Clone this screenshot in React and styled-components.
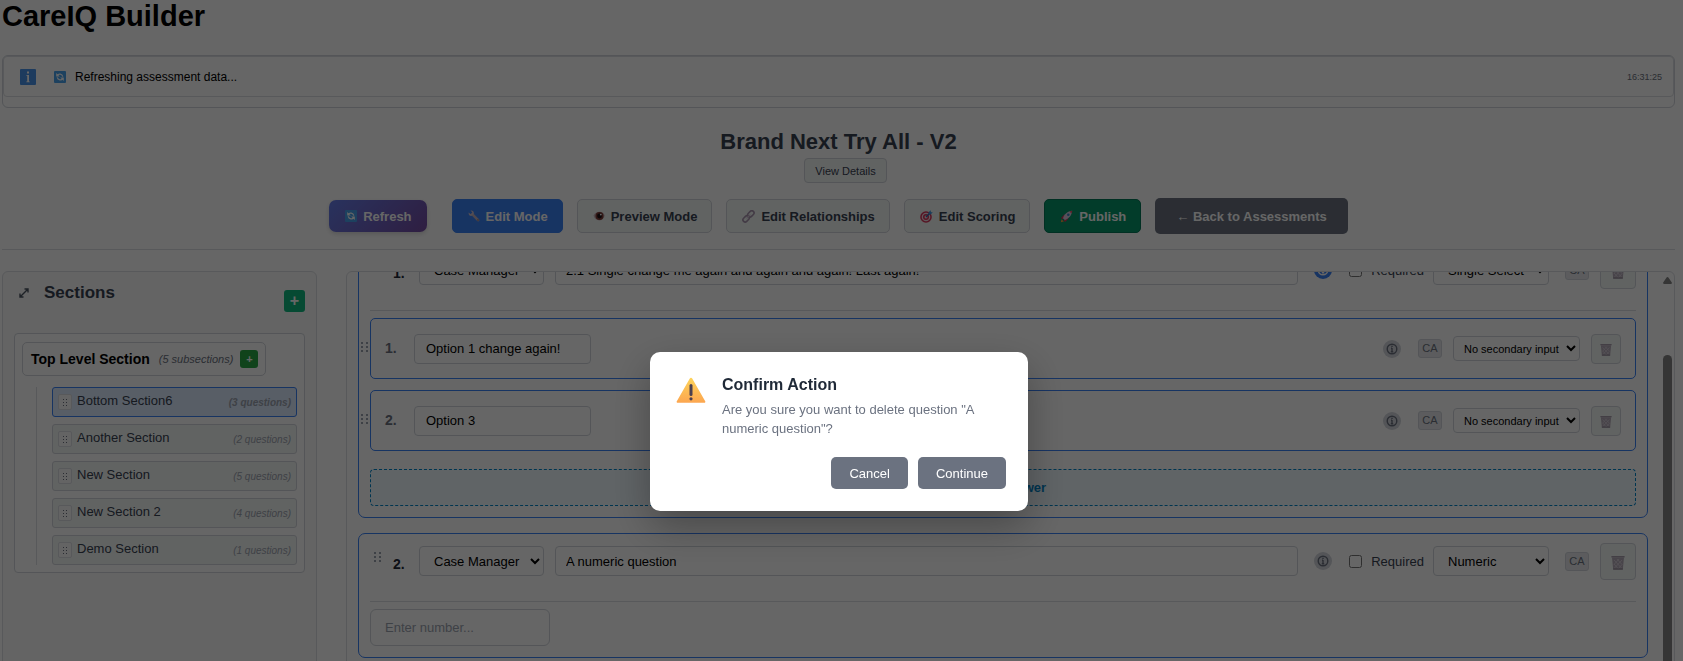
import React, { useLayoutEffect, useRef } from "react";
import styled, { createGlobalStyle, css } from "styled-components";

const GlobalStyle = createGlobalStyle`
  *, *::before, *::after { box-sizing: border-box; }
  body {
    margin: 0;
    background: #fff;
    color: #000;
    font-family: "Liberation Sans", Arial, sans-serif;
    font-size: 13px;
  }
  button, input, select { font-family: inherit; font-size: 13px; margin: 0; }
  h1, h2, h3, p, ul { margin: 0; padding: 0; }
  svg { flex: none; }
`;

/* ---------- Page frame ---------- */

const Page = styled.main`
  display: flex;
  flex-direction: column;
  height: 100vh;
  overflow: hidden;
  padding: 0 8px 0 2px;
`;

const PageTitle = styled.h1`
  flex: none;
  font-size: 29px;
  line-height: 33px;
  margin-bottom: 22px;
`;

const StatusPanel = styled.section`
  flex: none;
  border: 1px solid #d1d5db;
  border-radius: 6px;
  padding-bottom: 10px;
`;

const StatusRow = styled.div`
  display: flex;
  align-items: center;
  height: 41px;
  padding: 0 11px 0 16px;
  border: 1px solid #dcdfe3;
  border-radius: 4px;
  font-size: 12px;
`;

const StatusText = styled.span`
  display: flex;
  align-items: center;
  gap: 9px;
  flex: 1;
  margin-left: 18px;
`;

const StatusTime = styled.time`
  font-size: 9px;
  color: #6b7280;
`;

const Header = styled.header`
  flex: none;
  display: flex;
  flex-direction: column;
  align-items: center;
  padding: 21px 0 15px;
  margin-bottom: 21px;
  border-bottom: 1px solid #dcdfe3;
`;

const AssessmentName = styled.h2`
  font-size: 22px;
  line-height: 26px;
  margin-bottom: 3px;
  color: #374151;
`;

const DetailsButton = styled.button`
  height: 25px;
  margin-left: 14px;
  padding: 0 10px;
  font-size: 11px;
  color: #374151;
  background: #f3f7f5;
  border: 1px solid #d1d5db;
  border-radius: 4px;
`;

const Toolbar = styled.div`
  display: flex;
  align-items: center;
  gap: 14px;
  margin-top: 15px;
`;

const toolTones = {
  plain: css`
    color: #374151;
    background: #f3f7f5;
    border: 1px solid #d1d5db;
  `,
  blue: css`
    color: #fff;
    background: #3b82f6;
    border: 1px solid #3b82f6;
  `,
  green: css`
    color: #fff;
    background: #059669;
    border: 1px solid #047857;
  `,
  violet: css`
    height: 32px;
    margin-right: 11px;
    padding: 0 15px 0 16px;
    color: #fff;
    background: linear-gradient(135deg, #667eea 0%, #764ba2 100%);
    border: 0;
    border-radius: 7px;
    box-shadow: 0 2px 4px rgba(0, 0, 0, 0.15);
  `,
  slate: css`
    height: 36px;
    padding: 0 21px;
    color: #fff;
    background: #6b7280;
    border: 0;
  `,
};

const ToolButton = styled.button`
  display: flex;
  align-items: center;
  gap: 6px;
  height: 34px;
  padding: 0 14px 0 15px;
  font-weight: 700;
  border-radius: 5px;
  white-space: nowrap;
  ${(p) => toolTones[p.$tone]}
`;

/* ---------- Workspace ---------- */

const Workspace = styled.div`
  flex: none;
  display: flex;
  gap: 29px;
  height: 90vh;
`;

const Sidebar = styled.aside`
  flex: 0 0 315px;
  padding: 11px;
  background: #fafafa;
  border: 1px solid #dcdfe3;
  border-radius: 6px;
`;

const SidebarHead = styled.div`
  display: flex;
  align-items: flex-start;
  height: 50px;
  padding-left: 4px;
`;

const ExpandButton = styled.button`
  display: flex;
  padding: 4px 0;
  background: none;
  border: 0;
`;

const SidebarTitle = styled.h3`
  flex: 1;
  margin-left: 14px;
  font-size: 17px;
  line-height: 20px;
  color: #374151;
`;

const AddButton = styled.button`
  display: flex;
  align-items: center;
  justify-content: center;
  width: ${(p) => (p.$small ? 18 : 21)}px;
  height: ${(p) => (p.$small ? 18 : 22)}px;
  margin-top: ${(p) => (p.$small ? 0 : 7)}px;
  padding: 0;
  color: #fff;
  font-size: ${(p) => (p.$small ? 11 : 16)}px;
  font-weight: 700;
  background: ${(p) => (p.$small ? "#28a745" : "#10b981")};
  border: 0;
  border-radius: 3px;
`;

const Tree = styled.div`
  padding: 8px 7px 7px;
  background: #fff;
  border: 1px solid #d1d5db;
  border-radius: 4px;
`;

const TreeHead = styled.div`
  display: inline-flex;
  align-items: center;
  height: 34px;
  padding: 0 7px 0 8px;
  border: 1px solid #d1d5db;
  border-radius: 5px;
`;

const TreeTitle = styled.span`
  font-size: 14px;
  font-weight: 700;
`;

const TreeNote = styled.em`
  margin: 0 7px 0 9px;
  font-size: 11px;
  color: #6b7280;
`;

const Branch = styled.ul`
  display: flex;
  flex-direction: column;
  gap: 7px;
  margin: 11px 0 0 14px;
  padding-left: 15px;
  border-left: 1px solid #dcdfe3;
  list-style: none;
`;

const BranchItem = styled.li`
  display: flex;
  align-items: center;
  height: 30px;
  padding: 0 5px;
  color: #374151;
  background: ${(p) => (p.$active ? "#dbeafe" : "#f3f7f5")};
  border: 1px solid ${(p) => (p.$active ? "#3b82f6" : "#d1d5db")};
  border-radius: 3px;
`;

const Grip = styled.span`
  display: flex;
  align-items: center;
  justify-content: center;
  width: 14px;
  height: 16px;
  border: 1px solid #dcdfe3;
  border-radius: 2px;
  background: #fafafa;
`;

const BranchName = styled.span`
  flex: 1;
  margin-left: 5px;
  padding-bottom: 3px;
`;

const BranchCount = styled.em`
  font-size: 10px;
  font-weight: ${(p) => (p.$active ? 700 : 400)};
  color: #9ca3af;
`;

/* ---------- Question editor ---------- */

const Editor = styled.section`
  flex: 1;
  min-width: 0;
  display: flex;
  border: 1px solid #dcdfe3;
  border-radius: 6px;
  overflow: hidden;
`;

const QuestionScroll = styled.div`
  flex: 1;
  min-width: 0;
  overflow-y: auto;
  scrollbar-width: none;
`;

const QuestionList = styled.div`
  display: flex;
  flex-direction: column;
  gap: 15px;
  min-height: 130%;
  padding: 11px 12px 11px 11px;
`;

const ScrollRail = styled.div`
  flex: 0 0 14px;
  display: flex;
  flex-direction: column;
  align-items: center;
  padding-top: 5px;
`;

const ScrollThumb = styled.div`
  flex: 1;
  width: 9px;
  margin-top: 71px;
  background: #858585;
  border-radius: 5px;
`;

const Card = styled.article`
  padding: 11px;
  border: 1px solid #3b82f6;
  border-radius: 7px;
`;

const CardHead = styled.div`
  display: flex;
  align-items: center;
  height: 57px;
  padding-bottom: 24px;
  border-bottom: 1px solid #dcdfe3;
  margin-bottom: 7px;
`;

const DragDots = styled.span`
  display: flex;
  align-self: flex-start;
  padding: 7px 0 0 4px;
`;

const CardNumber = styled.span`
  width: 38px;
  padding: 6px 0 0 12px;
  font-size: 14px;
  font-weight: 700;
  color: #1f2937;
`;

const fieldBox = css`
  background: #fff;
  color: #000;
  border: 1px solid #d1d5db;
  border-radius: 4px;
`;

const Select = styled.select`
  ${fieldBox}
  width: ${(p) => p.$width}px;
  height: ${(p) => (p.$small ? 25 : 30)}px;
  padding: 0 ${(p) => (p.$small ? 0 : 1)}px 0 ${(p) => (p.$small ? 6 : 10)}px;
  font-size: ${(p) => (p.$small ? 11 : 13)}px;
`;

const QuestionInput = styled.input`
  ${fieldBox}
  flex: 1;
  min-width: 0;
  height: 30px;
  margin: 0 16px 0 11px;
  padding: 0 10px;
`;

const AnswerInput = styled.input`
  ${fieldBox}
  width: 177px;
  height: 30px;
  padding: 0 11px;
`;

const NumberInput = styled.input`
  ${fieldBox}
  display: block;
  width: 180px;
  height: 37px;
  padding: 0 14px;
  border-radius: 6px;
  &::placeholder { color: #9ca3af; }
`;

const InfoBadge = styled.button`
  display: flex;
  align-items: center;
  justify-content: center;
  width: 18px;
  height: 18px;
  padding: 0;
  color: ${(p) => (p.$active ? "#fff" : "#6b7280")};
  background: ${(p) => (p.$active ? "#3b82f6" : "#d1d5db")};
  border: 0;
  border-radius: 50%;
`;

const RequiredLabel = styled.label`
  display: flex;
  align-items: center;
  gap: 9px;
  margin: 0 9px 0 17px;
  color: #374151;
`;

const Tick = styled.input`
  width: 13px;
  height: 13px;
`;

const CaTag = styled.span`
  width: 24px;
  height: 19px;
  margin: 0 11px 0 ${(p) => (p.$wide ? 16 : 17)}px;
  font-size: 11px;
  line-height: 17px;
  text-align: center;
  color: #6b7280;
  background: #e5e7eb;
  border: 1px solid #d1d5db;
  border-radius: 3px;
`;

const TrashButton = styled.button`
  display: flex;
  flex: none;
  align-items: center;
  justify-content: center;
  width: ${(p) => (p.$large ? 36 : 30)}px;
  height: ${(p) => (p.$large ? 37 : 30)}px;
  margin-left: ${(p) => (p.$large ? 0 : 11)}px;
  padding: 3px 0 0;
  background: #f3f7f5;
  border: 1px solid #d1d5db;
  border-radius: 4px;
`;

const OptionCard = styled.div`
  position: relative;
  display: flex;
  align-items: center;
  height: 61px;
  margin-bottom: 11px;
  padding: 0 14px;
  border: 1px solid #3b82f6;
  border-radius: 5px;
`;

const OptionDots = styled.span`
  position: absolute;
  left: -10px;
  top: 23px;
  display: flex;
`;

const OptionNumber = styled.span`
  width: 29px;
  padding-bottom: 2px;
  font-size: 14px;
  font-weight: 700;
  color: #6b7280;
`;

const Spacer = styled.span`
  flex: 1;
`;

const AddAnswer = styled.button`
  display: block;
  width: 100%;
  height: 37px;
  margin-top: 18px;
  font-weight: 700;
  color: #0284c7;
  background: #f0f9ff;
  border: 1px dashed #0284c7;
  border-radius: 4px;
`;

/* ---------- Dialog ---------- */

const Overlay = styled.div`
  position: fixed;
  inset: 0;
  display: flex;
  align-items: flex-start;
  justify-content: center;
  padding: 352px 5px 0 0;
  background: rgba(0, 0, 0, 0.6);
`;

const Dialog = styled.div`
  width: 378px;
  padding: 22px;
  background: #fff;
  border-radius: 10px;
  box-shadow: 0 16px 40px rgba(0, 0, 0, 0.3);
`;

const DialogBody = styled.div`
  display: flex;
  align-items: flex-start;
  gap: 16px;
  padding-left: 4px;

  > svg { margin-top: 3px; }
`;

const DialogTitle = styled.h2`
  font-size: 16px;
  line-height: 22px;
  margin-bottom: 4px;
  color: #1f2937;
`;

const DialogText = styled.p`
  line-height: 19px;
  color: #6b7280;
`;

const DialogActions = styled.div`
  display: flex;
  justify-content: flex-end;
  gap: 10px;
  margin-top: 19px;
`;

const DialogButton = styled.button`
  height: 32px;
  padding: 0 18px;
  font-weight: 500;
  color: #fff;
  background: #6b7280;
  border: 0;
  border-radius: 5px;
`;

/* ---------- Icons ---------- */

const InfoSquare = () => (
  <svg width="16" height="16" viewBox="0 0 16 16" aria-hidden="true">
    <rect width="16" height="16" rx="1" fill="#4a94ea" />
    <rect x="7" y="2.5" width="2" height="2" fill="#fff" />
    <path d="M6.3 6H9v6.500h.8v.8H6.300v-.8h.9V6.800h-.9z" fill="#fff" />
  </svg>
);

const RefreshIcon = () => (
  <svg width="12" height="12" viewBox="0 0 12 12" aria-hidden="true">
    <rect width="12" height="12" rx="1" fill="#4aa3ee" />
    <path d="M3.200 4.400C4.500 2.600 8 2.600 8.800 5.600M8.800 7.600C7.500 9.400 4 9.400 3.200 6.400" fill="none" stroke="#fff" strokeWidth="1.300" />
    <path d="M2.200 2v3.600h3.600zM9.800 10V6.400H6.200z" fill="#fff" />
  </svg>
);

const WrenchIcon = () => (
  <svg width="12" height="12" viewBox="0 0 12 12" aria-hidden="true">
    <path d="M4.200 4.200l5.900 5.900" stroke="#c3b2bf" strokeWidth="2.600" strokeLinecap="round" />
    <path d="M2.500.6L4.200 2.300 3.900 3.700 2.400 4 .7 2.400C.2 4.300 1.500 6 3.400 5.900L5.900 3.400C6 1.500 4.400.1 2.500.6z" fill="#cfc2d2" />
    <circle cx="10" cy="10" r=".8" fill="#8a6a6a" />
  </svg>
);

const EyeIcon = () => (
  <svg width="12" height="12" viewBox="0 0 12 12" aria-hidden="true">
    <path d="M.5 5.500C2 3 4 1.800 6.500 1.800c2.800 0 4.500 1.500 5.200 3.700-.6 3-2.700 4.900-5.200 4.900C3.800 10.400 1.500 8.800.5 5.500z" fill="#c9b3ba" />
    <circle cx="6.500" cy="6" r="4" fill="#7a3a34" />
    <circle cx="6.500" cy="6" r="2.400" fill="#1c1014" />
    <circle cx="7.800" cy="4.600" r=".9" fill="#fff" />
  </svg>
);

const LinkIcon = () => (
  <svg width="13" height="13" viewBox="0 0 13 13" fill="none" aria-hidden="true">
    <g stroke="#a794ad" strokeWidth="1.600">
      <rect x="5.400" y="1.700" width="7" height="4.400" rx="2.200" transform="rotate(-45 8.900 3.900)" />
      <rect x=".6" y="6.700" width="7" height="4.400" rx="2.200" transform="rotate(-45 4.100 8.900)" />
    </g>
    <path d="M4.600 8.400l3.800-3.800" stroke="#d3c6d6" strokeWidth="1.300" />
  </svg>
);

const TargetIcon = () => (
  <svg width="13" height="13" viewBox="0 0 13 13" aria-hidden="true">
    <circle cx="6" cy="7" r="5.800" fill="#d8355a" />
    <circle cx="6" cy="7" r="4.300" fill="#f2dce3" />
    <circle cx="6" cy="7" r="3" fill="#d8355a" />
    <circle cx="6" cy="7" r="1.500" fill="#f2dce3" />
    <path d="M6 7l4-4" stroke="#2b6cb0" strokeWidth="1.200" />
    <path d="M8.600 4.400V2.300L10.800.2v2h2L10.700 4.400z" fill="#3d97e0" />
  </svg>
);

const RocketIcon = () => (
  <svg width="13" height="13" viewBox="0 0 13 13" aria-hidden="true">
    <path d="M1 8l3-3.200 2 .2-3 4.400zM5 12l3.200-3-.2-2-4.400 3z" fill="#d8355a" />
    <path d="M3 8.200C4 4.500 7.500 1.200 12.200.8 11.800 5.500 8.500 9 4.800 10z" fill="#d9cbe0" />
    <path d="M9.500 1.500L12.300.7l-.8 2.800z" fill="#e8475f" />
    <circle cx="8.300" cy="4.700" r="1.300" fill="#3d84c6" />
    <path d="M.8 12.300l.8-3 2.200 2.200z" fill="#f59a3c" />
  </svg>
);

const ExpandIcon = () => (
  <svg width="12" height="12" viewBox="0 0 12 12" fill="none" stroke="#4b5563" aria-hidden="true">
    <path d="M2.500 9.500L9.500 2.500M6.500 2h3.500v3.500M2 6.500v3.500h3.500" strokeWidth="1.400" />
  </svg>
);

const Dots = ({ size = 7, color = "#9ca3af" }) => (
  <svg width={size} height={size === 7 ? 11 : 7} viewBox={size === 7 ? "0 0 7 11" : "0 0 5 7"} fill={color} aria-hidden="true">
    {(size === 7 ? [0, 4, 8] : [0, 3, 6]).map((y) => (
      <g key={y}>
        <rect x="0" y={y} width={size === 7 ? 2 : 1} height={size === 7 ? 2 : 1} />
        <rect x={size === 7 ? 5 : 3} y={y} width={size === 7 ? 2 : 1} height={size === 7 ? 2 : 1} />
      </g>
    ))}
  </svg>
);

const InfoGlyph = () => (
  <svg width="12" height="12" viewBox="0 0 12 12" fill="none" stroke="currentColor" aria-hidden="true">
    <circle cx="6" cy="6" r="4.800" strokeWidth="1.400" />
    <path d="M6 5v4M5 5.200h1M4.800 8.800h2.400M6 2.800v1.300" strokeWidth="1.400" />
  </svg>
);

const TrashIcon = ({ size }) => (
  <svg width={size} height={size} viewBox="0 0 14 14" aria-hidden="true">
    <path d="M1 1.500h12L11.800 13.500H2.200z" fill="#b5abb9" />
    <path d="M3 4l7.500 8M6 3l5 5.500M3 8l4.500 5M11 4l-7.500 8M8 3L3 8.500M11 8.500L7 13" stroke="#d9d2dc" strokeWidth=".8" />
    <rect x=".3" y="0" width="13.400" height="1.600" rx=".5" fill="#a79dac" />
    <rect x="2.200" y="12.300" width="9.600" height="1.400" fill="#9a909f" />
  </svg>
);

const WarningIcon = () => (
  <svg width="30" height="26" viewBox="0 0 30 26" aria-hidden="true">
    <defs>
      <linearGradient id="warn" x1="0" y1="0" x2="0" y2="1">
        <stop offset="0" stopColor="#fdd35a" />
        <stop offset="1" stopColor="#fca650" />
      </linearGradient>
    </defs>
    <path d="M15 .8c.5 0 .9.200 1.200.7l13 22.700c.5.800 0 1.600-.9 1.600H1.700c-.9 0-1.400-.8-.9-1.600l13-22.700c.3-.5.700-.7 1.200-.7z" fill="url(#warn)" />
    <rect x="13.500" y="7" width="3" height="12" rx="1.500" fill="#4a3f4f" />
    <circle cx="15" cy="21.800" r="1.600" fill="#4a3f4f" />
  </svg>
);

const ScrollArrow = () => (
  <svg width="9" height="7" viewBox="0 0 9 7" fill="#858585" aria-hidden="true">
    <path d="M4.500 0c.4 0 .7.200.9.500L8.800 5.500c.4.700 0 1.500-.8 1.500H1C.2 7-.2 6.200.2 5.500L3.600.5c.2-.3.500-.5.900-.5z" />
  </svg>
);

/* ---------- Parts ---------- */

const sections = [
  { name: "Bottom Section6", count: 3, active: true },
  { name: "Another Section", count: 2 },
  { name: "New Section", count: 5 },
  { name: "New Section 2", count: 4 },
  { name: "Demo Section", count: 1 },
];

const tools = [
  { label: "Refresh", tone: "violet", Icon: RefreshIcon },
  { label: "Edit Mode", tone: "blue", Icon: WrenchIcon },
  { label: "Preview Mode", tone: "plain", Icon: EyeIcon },
  { label: "Edit Relationships", tone: "plain", Icon: LinkIcon },
  { label: "Edit Scoring", tone: "plain", Icon: TargetIcon },
  { label: "Publish", tone: "green", Icon: RocketIcon },
  { label: "← Back to Assessments", tone: "slate" },
];

function Question({ number, text, type, info, children }) {
  return (
    <Card>
      <CardHead>
        <DragDots><Dots /></DragDots>
        <CardNumber>{number}.</CardNumber>
        <Select $width={125} aria-label="Assigned role" defaultValue="Case Manager">
          <option>Case Manager</option>
        </Select>
        <QuestionInput aria-label="Question text" defaultValue={text} />
        <InfoBadge $active={info} aria-label="Question info"><InfoGlyph /></InfoBadge>
        <RequiredLabel><Tick type="checkbox" />Required</RequiredLabel>
        <Select $width={116} aria-label="Question type" defaultValue={type}>
          <option>{type}</option>
        </Select>
        <CaTag $wide>CA</CaTag>
        <TrashButton $large aria-label="Delete question"><TrashIcon size={14} /></TrashButton>
      </CardHead>
      {children}
    </Card>
  );
}

function Option({ number, text }) {
  return (
    <OptionCard>
      <OptionDots><Dots /></OptionDots>
      <OptionNumber>{number}.</OptionNumber>
      <AnswerInput aria-label="Answer text" defaultValue={text} />
      <Spacer />
      <InfoBadge aria-label="Answer info"><InfoGlyph /></InfoBadge>
      <CaTag>CA</CaTag>
      <Select $small $width={127} aria-label="Secondary input" defaultValue="No secondary input">
        <option>No secondary input</option>
      </Select>
      <TrashButton aria-label="Delete answer"><TrashIcon size={12} /></TrashButton>
    </OptionCard>
  );
}

export default function App() {
  const scroller = useRef(null);

  useLayoutEffect(() => {
    scroller.current.scrollTop = 41;
  }, []);

  return (
    <>
      <GlobalStyle />
      <Page>
        <PageTitle>CareIQ Builder</PageTitle>
        <StatusPanel>
          <StatusRow>
            <InfoSquare />
            <StatusText><RefreshIcon />Refreshing assessment data...</StatusText>
            <StatusTime>16:31:25</StatusTime>
          </StatusRow>
        </StatusPanel>

        <Header>
          <AssessmentName>Brand Next Try All - V2</AssessmentName>
          <DetailsButton>View Details</DetailsButton>
          <Toolbar>
            {tools.map(({ label, tone, Icon }) => (
              <ToolButton key={label} $tone={tone}>
                {Icon && <Icon />}
                {label}
              </ToolButton>
            ))}
          </Toolbar>
        </Header>

        <Workspace>
          <Sidebar>
            <SidebarHead>
              <ExpandButton aria-label="Expand"><ExpandIcon /></ExpandButton>
              <SidebarTitle>Sections</SidebarTitle>
              <AddButton aria-label="Add section">+</AddButton>
            </SidebarHead>
            <Tree>
              <TreeHead>
                <TreeTitle>Top Level Section</TreeTitle>
                <TreeNote>(5 subsections)</TreeNote>
                <AddButton $small aria-label="Add subsection">+</AddButton>
              </TreeHead>
              <Branch>
                {sections.map((s) => (
                  <BranchItem key={s.name} $active={s.active}>
                    <Grip><Dots size={5} color="#6b7280" /></Grip>
                    <BranchName>{s.name}</BranchName>
                    <BranchCount $active={s.active}>({s.count} questions)</BranchCount>
                  </BranchItem>
                ))}
              </Branch>
            </Tree>
          </Sidebar>

          <Editor>
            <QuestionScroll ref={scroller}>
              <QuestionList>
                <Question
                  number={1}
                  text="2.1 Single change me again and again and again! Last again!"
                  type="Single Select"
                  info
                >
                  <Option number={1} text="Option 1 change again!" />
                  <Option number={2} text="Option 3" />
                  <AddAnswer>+ Add Answer</AddAnswer>
                </Question>
                <Question number={2} text="A numeric question" type="Numeric">
                  <NumberInput aria-label="Numeric answer" placeholder="Enter number..." />
                </Question>
              </QuestionList>
            </QuestionScroll>
            <ScrollRail>
              <ScrollArrow />
              <ScrollThumb />
            </ScrollRail>
          </Editor>
        </Workspace>
      </Page>

      <Overlay>
        <Dialog role="dialog" aria-modal="true" aria-labelledby="confirm-title">
          <DialogBody>
            <WarningIcon />
            <div>
              <DialogTitle id="confirm-title">Confirm Action</DialogTitle>
              <DialogText>Are you sure you want to delete question "A numeric question"?</DialogText>
            </div>
          </DialogBody>
          <DialogActions>
            <DialogButton>Cancel</DialogButton>
            <DialogButton>Continue</DialogButton>
          </DialogActions>
        </Dialog>
      </Overlay>
    </>
  );
}
